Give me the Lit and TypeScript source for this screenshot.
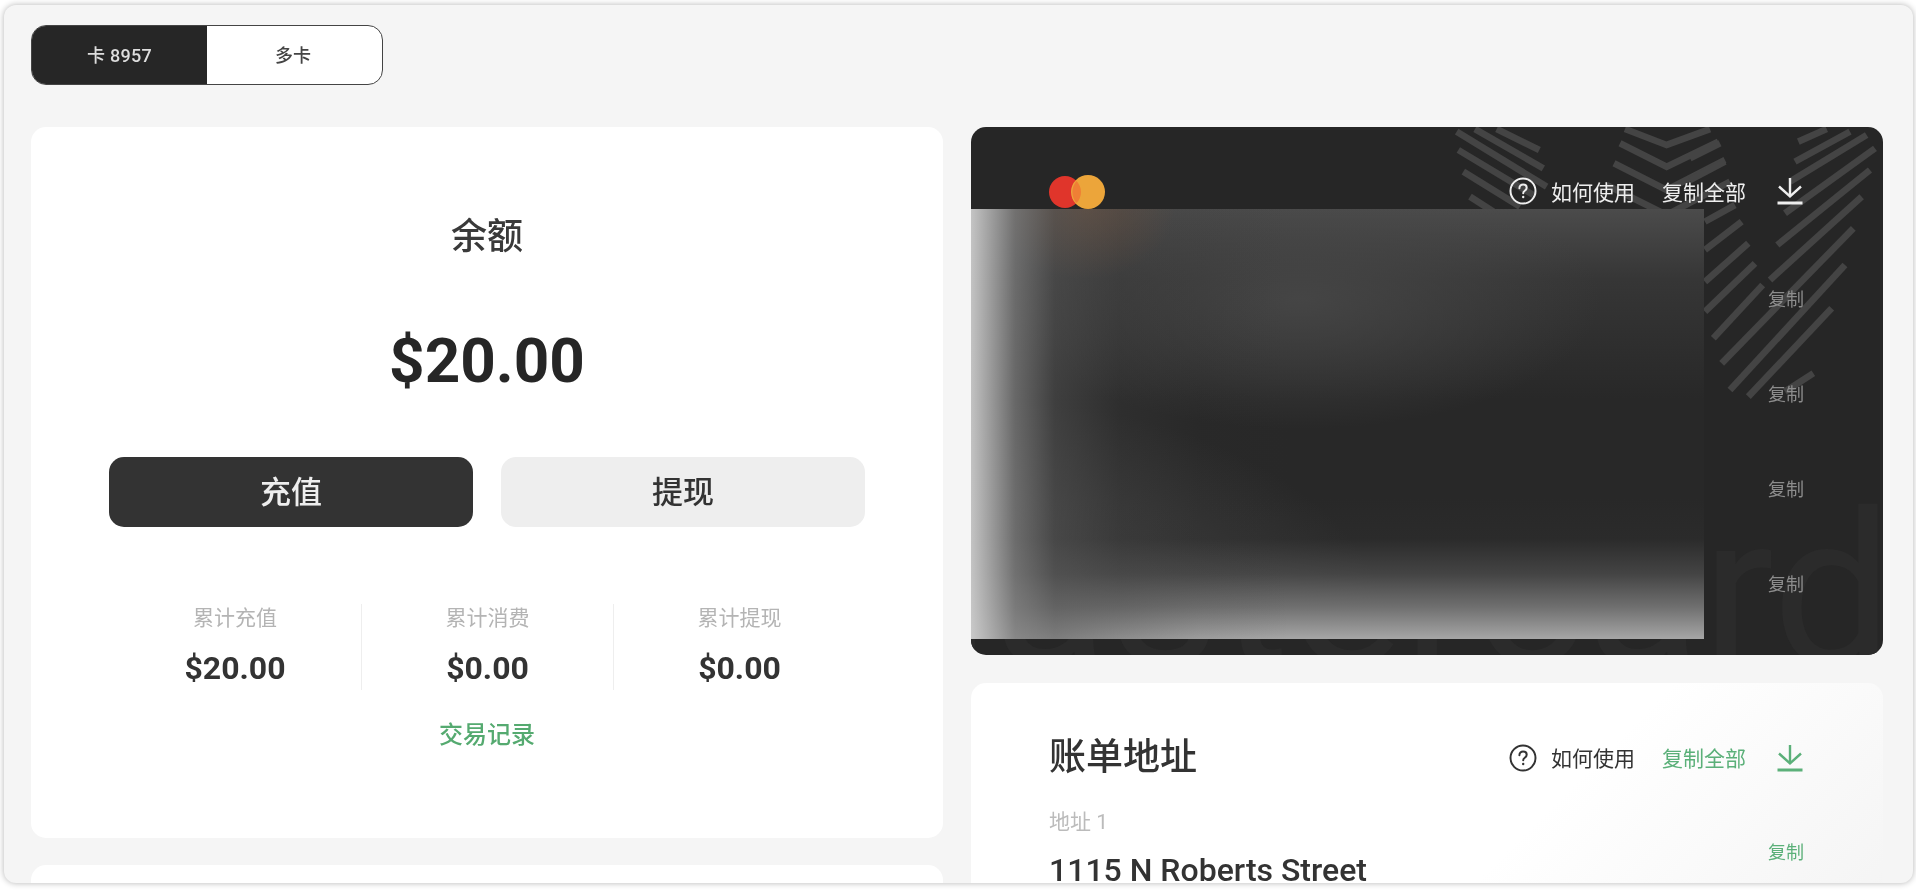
import { LitElement, html, css, svg } from "lit";
import { customElement } from "lit/decorators.js";

const helpIcon = html`<svg class="ic" width="28" height="28" viewBox="0 0 28 28" fill="none" stroke="currentColor">
  <circle cx="14" cy="14" r="12.5" stroke-width="2"></circle>
  <path d="M10.4 11.2c0-2.2 1.6-3.6 3.7-3.6 2.1 0 3.6 1.3 3.6 3.1 0 1.5-.8 2.2-1.9 3-1 .7-1.6 1.3-1.6 2.6" stroke-width="2" stroke-linecap="round"></path>
  <circle cx="14.2" cy="20" r="1.2" fill="currentColor" stroke="none"></circle>
</svg>`;

const downloadIcon = html`<svg class="ic" width="27" height="28" viewBox="0 0 27 28" fill="none" stroke="currentColor" stroke-width="2.4">
  <path d="M13 1v18"></path><path d="M2 9.5l11 10 11-10"></path><path d="M0.5 26h25" stroke-width="2.8"></path>
</svg>`;

const rightLines = [
  "M0 100L90 55", "M0 165L105 110",
  "M45 290L135 240", "M45 375L155 290", "M45 470L175 355", "M45 560L195 415", "M70 640L218 480",
  "M325 50L410 12", "M315 110L480 20", "M300 170L530 30", "M285 265L555 70", "M262 360L540 135",
  "M240 465L515 215", "M95 715L490 310", "M120 795L465 420", "M175 815L425 550", "M285 800L370 745",
];
const topLines = [
  "M140 12L268 75", "M75 12L280 130", "M20 20L290 185", "M25 75L250 210", "M40 140L210 245", "M60 215L130 260",
  "M525 12L650 60L780 12", "M510 55L650 125L805 50", "M492 115L650 195L825 105", "M470 180L650 270L840 170",
];

const stripes = svg`<svg class="pattern" width="912" height="300" viewBox="0 0 912 300" fill="none" stroke="#444" stroke-width="20">
  <g transform="translate(479 -2) scale(.3333)">${topLines.map((d) => svg`<path d=${d}></path>`)}</g>
  <g transform="translate(719 -2) scale(.3333)">${rightLines.map((d) => svg`<path d=${d}></path>`)}</g>
</svg>`;

@customElement("app-root")
export class AppRoot extends LitElement {
  static styles = css`
    :host { display: block; height: 890px; overflow: hidden; background: #fff; font-family: Roboto, "Noto Sans CJK SC", sans-serif; color: #333; }
    * { box-sizing: border-box; }
    .frame { margin: 5px 3px 0 4px; height: 878px; background: #f5f5f5; border-radius: 12px; box-shadow: 0 0 6px rgba(0,0,0,.3); overflow: hidden; padding: 20px 30px 0 27px; filter: blur(.6px); }
    .seg { display: grid; grid-template-columns: 175px 174px; width: 352px; height: 60px; border: 1.5px solid #444; border-radius: 15px; overflow: hidden; background: #fff; margin-bottom: 42px; font-size: 18px; font-weight: 500; }
    .seg span { display: flex; align-items: center; justify-content: center; padding-bottom: 2px; }
    .seg .on { background: #262626; color: #ddd; letter-spacing: .3px; }
    .seg .off { color: #444; padding-right: 2px; }
    .cols { display: grid; grid-template-columns: 912px 912px; gap: 28px; align-items: start; }
    .col { display: flex; flex-direction: column; gap: 27px; }
    .col.right { gap: 28px; }
    .card { background: #fff; border-radius: 15px; }
    .balance { height: 711px; padding: 85px 78px 0; text-align: center; }
    .balance h2 { margin: 0; font-size: 36px; line-height: 50px; font-weight: 500; color: #3a3a3a; }
    .amount { margin-top: 63px; font-size: 62px; line-height: 72px; font-weight: 700; color: #262626; }
    .btns { margin-top: 60px; display: grid; grid-template-columns: 364px 364px; gap: 28px; }
    .btn { height: 70px; border-radius: 15px; display: flex; align-items: center; justify-content: center; font-size: 31px; font-weight: 500; padding-bottom: 6px; }
    .btn.dark { background: #333; color: #eee; }
    .btn.light { background: #eee; color: #333; }
    .stats { margin-top: 77px; height: 86px; display: grid; grid-template-columns: repeat(3, 252px); }
    .stat { display: flex; flex-direction: column; align-items: center; }
    .stat + .stat { border-left: 1px solid #eee; }
    .stat small { font-size: 21px; line-height: 28px; color: #b4b4b4; font-weight: 400; }
    .stat b { margin-top: 16px; font-size: 32px; line-height: 40px; font-weight: 700; color: #333; }
    .link { margin-top: 29px; font-size: 24px; line-height: 32px; font-weight: 500; color: #55aa70; }
    .next { height: 60px; }
    .vcard { position: relative; height: 528px; background: #262626; border-radius: 15px; overflow: hidden; padding: 48px 78px 0; color: #eee; }
    .pattern { position: absolute; left: 0; top: 0; }
    .mark { position: absolute; right: -10px; bottom: -43px; font-family: Roboto, sans-serif; font-size: 214px; line-height: 214px; font-weight: 400; color: #2b2b2b; white-space: nowrap; }
    .head { position: relative; display: flex; align-items: center; justify-content: space-between; height: 34px; }
    .mc { display: block; }
    .acts { display: flex; align-items: center; font-size: 21px; }
    .vcard .acts { margin-bottom: 2px; }
    .acts .ic { display: block; }
    .acts .t1 { margin-left: 14px; }
    .acts .t2 { margin-left: 27px; }
    .acts .dl { margin-left: 31px; margin-right: 1px; }
    .rows { position: relative; margin-top: 41px; padding-right: 1px; }
    .row { height: 95px; display: flex; align-items: center; justify-content: flex-end; font-size: 18px; color: #8c8c8c; }
    .blur { position: absolute; left: -1px; top: 82px; width: 734px; height: 430px; background-color: #282828; background-image:
        linear-gradient(90deg, rgba(205,205,205,.95) 0, rgba(125,125,125,.75) 45px, rgba(85,85,85,.5) 85px, rgba(65,65,65,.25) 150px, rgba(50,50,50,.08) 230px, rgba(40,40,40,0) 320px),
        linear-gradient(0deg, #a6a6a6 0, rgba(115,115,115,.95) 32px, rgba(80,80,80,.7) 65px, rgba(50,50,50,.3) 100px, rgba(40,40,40,0) 140px),
        radial-gradient(420px 240px at 0 100%, rgba(110,110,110,.55), rgba(110,110,110,0)),
        radial-gradient(90px 70px at 115px 0, rgba(130,85,55,.45), rgba(130,85,55,0)),
        radial-gradient(300px 130px at 330px 90px, rgba(72,72,72,.85), rgba(72,72,72,0)),
        linear-gradient(180deg, #4b4b4b 0, rgba(60,60,60,.7) 70px, rgba(40,40,40,0) 190px); }
    .addr { height: 260px; padding: 49px 78px 0; background: linear-gradient(135deg, #fff 60%, #f3f3f3 100%); }
    .addr .head { height: 52px; }
    .addr h3 { margin: 0; font-size: 37px; line-height: 52px; font-weight: 500; color: #333; }
    .addr .t1, .addr .t2 { padding-bottom: 2px; }
    .acts.green .t2, .acts.green .dl { color: #5bb079; }
    .acts.plain { color: #333; }
    .line { display: flex; justify-content: space-between; margin-top: 25px; padding-right: 1px; }
    .line small { display: block; font-size: 21px; line-height: 26px; color: #bbb; font-weight: 400; }
    .line strong { display: block; margin-top: 17px; font-size: 32px; line-height: 36px; font-weight: 500; color: #333; }
    .line em { font-style: normal; font-size: 18px; line-height: 26px; margin-top: 31px; color: #5bb079; }
  `;

  render() {
    const stat = (l: string, v: string) => html`<div class="stat"><small>${l}</small><b>${v}</b></div>`;
    return html`<div class="frame">
      <div class="seg"><span class="on">卡 8957</span><span class="off">多卡</span></div>
      <div class="cols">
        <div class="col">
          <section class="card balance">
            <h2>余额</h2>
            <div class="amount">$20.00</div>
            <div class="btns"><div class="btn dark">充值</div><div class="btn light">提现</div></div>
            <div class="stats">${stat("累计充值", "$20.00")}${stat("累计消费", "$0.00")}${stat("累计提现", "$0.00")}</div>
            <div class="link">交易记录</div>
          </section>
          <section class="card next"></section>
        </div>
        <div class="col right">
          <section class="vcard">
            ${stripes}
            <div class="mark">Mastercard</div>
            <div class="head">
              <svg class="mc" width="58" height="34" viewBox="0 0 58 34">
                <circle cx="16" cy="17" r="16" fill="#e0352b"></circle>
                <circle cx="39" cy="17" r="17" fill="#eca53a"></circle>
                <path d="M27.5 5.9a17 17 0 0 0 0 22.2a16 16 0 0 0 0-22.2z" fill="#ef7f35"></path>
              </svg>
              <div class="acts">${helpIcon}<span class="t1">如何使用</span><span class="t2">复制全部</span><span class="dl">${downloadIcon}</span></div>
            </div>
            <div class="rows">
              <div class="row">复制</div><div class="row">复制</div><div class="row">复制</div><div class="row">复制</div>
            </div>
            <div class="blur"></div>
          </section>
          <section class="card addr">
            <div class="head">
              <h3>账单地址</h3>
              <div class="acts green plain">${helpIcon}<span class="t1">如何使用</span><span class="t2">复制全部</span><span class="dl">${downloadIcon}</span></div>
            </div>
            <div class="line">
              <div><small>地址 1</small><strong>1115 N Roberts Street</strong></div>
              <em>复制</em>
            </div>
          </section>
        </div>
      </div>
    </div>`;
  }
}
